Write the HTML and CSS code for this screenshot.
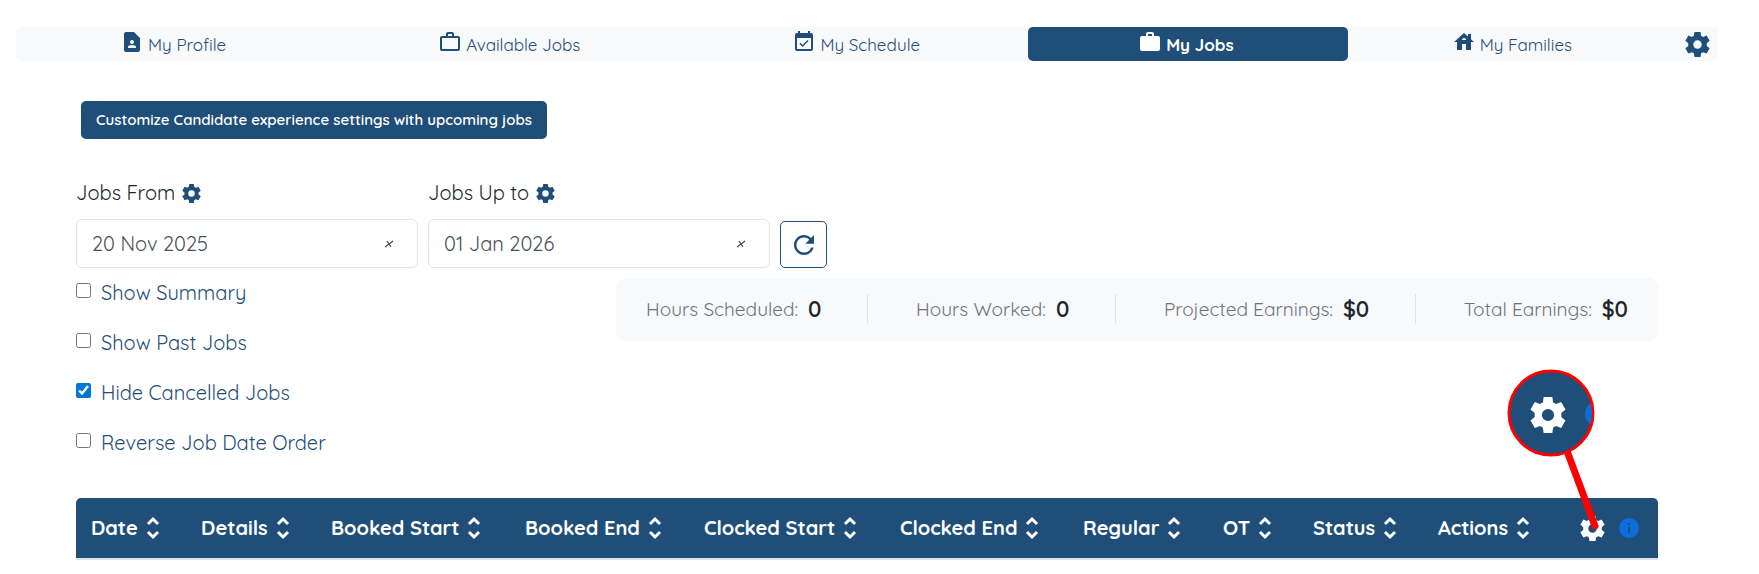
FILE: index.html
```
<!DOCTYPE html>
<html lang="en">
<head>
    <meta charset="UTF-8">
    <meta name="viewport" content="width=device-width, initial-scale=1.0">
    <title>My Jobs</title>
    <link rel="stylesheet" href="styles.css">
</head>
<body>

<!-- shared icons -->
<svg class="sprite" aria-hidden="true">
    <symbol id="gear" viewBox="2 2 20 20">
        <path fill-rule="evenodd" d="M9.6 2h4.8l.5 3 1.6.9 2.8-1.1 2.4 4.2-2.3 1.9v2.2l2.3 1.9-2.4 4.2-2.8-1.1-1.6.9-.5 3H9.6l-.5-3-1.6-.9-2.8 1.1L2.3 15l2.3-1.9v-2.2L2.3 9l2.4-4.2 2.8 1.1 1.6-.9zM12 8.6a3.4 3.4 0 1 0 0 6.8 3.4 3.4 0 0 0 0-6.8z"/>
    </symbol>
    <symbol id="sort" viewBox="0 0 14 24">
        <path d="M2 8l5-5 5 5M2 16l5 5 5-5" fill="none" stroke="currentColor" stroke-width="3"/>
    </symbol>
</svg>

<nav class="tabs">
    <a class="tab" href="#profile">
        <svg class="tab-icon" viewBox="0 0 24 24"><path d="M14 2H6c-1.1 0-1.99.9-1.99 2L4 20c0 1.1.89 2 1.99 2H18c1.1 0 2-.9 2-2V8l-6-6zm-2 8c1.1 0 2 .9 2 2s-.9 2-2 2-2-.9-2-2 .9-2 2-2zm4 8H8v-.57c0-.81.48-1.53 1.22-1.85.85-.37 1.79-.58 2.78-.58.99 0 1.93.21 2.78.58.74.32 1.22 1.04 1.22 1.85V18z"/></svg>
        <span>My Profile</span>
    </a>
    <a class="tab" href="#available">
        <svg class="tab-icon" viewBox="0 0 24 24"><path d="M14 6V4h-4v2h4zM4 8v11h16V8H4zm16-2c1.11 0 2 .89 2 2v11c0 1.11-.89 2-2 2H4c-1.11 0-2-.89-2-2l.01-11c0-1.11.88-2 1.99-2h4V4c0-1.11.89-2 2-2h4c1.11 0 2 .89 2 2v2h4z"/></svg>
        <span>Available Jobs</span>
    </a>
    <a class="tab" href="#schedule">
        <svg class="tab-icon" viewBox="0 0 24 24"><path d="M16.53 11.06L15.47 10l-4.88 4.88-2.12-2.12-1.06 1.06L10.59 17l5.94-5.94zM19 3h-1V1h-2v2H8V1H6v2H5c-1.11 0-1.99.9-1.99 2L3 19c0 1.1.89 2 2 2h14c1.1 0 2-.9 2-2V5c0-1.1-.9-2-2-2zm0 16H5V8h14v11z"/></svg>
        <span>My Schedule</span>
    </a>
    <a class="tab active" href="#jobs">
        <svg class="tab-icon" viewBox="0 0 24 24"><path d="M20 6h-4V4c0-1.11-.89-2-2-2h-4c-1.11 0-2 .89-2 2v2H4c-1.11 0-1.99.89-1.99 2L2 19c0 1.11.89 2 2 2h16c1.11 0 2-.89 2-2V8c0-1.11-.89-2-2-2zm-6 0h-4V4h4v2z"/></svg>
        <span>My Jobs</span>
    </a>
    <a class="tab" href="#families">
        <svg class="tab-icon" viewBox="0 0 24 24"><path d="M19 9.3V4h-3v2.6L12 3 2 12h3v8h5v-6h4v6h5v-8h3l-3-2.7zM10 10c0-1.1.9-2 2-2s2 .9 2 2h-4z"/></svg>
        <span>My Families</span>
    </a>
    <button class="icon-button tab-settings" type="button" aria-label="Tab settings"><svg class="gear-large"><use href="#gear"/></svg></button>
</nav>

<main>
    <button class="customize" type="button">Customize Candidate experience settings with upcoming jobs</button>

    <form class="filters">
        <div class="field">
            <div class="field-title">
                <label for="from">Jobs From</label>
                <button class="icon-button" type="button" aria-label="Jobs From settings"><svg class="gear-small"><use href="#gear"/></svg></button>
            </div>
            <div class="date-box">
                <input id="from" type="text" value="20 Nov 2025">
                <button class="clear" type="button" aria-label="Clear date"><svg viewBox="0 0 10 8"><path d="M1 7l8-6M3 1l4 6"/></svg></button>
            </div>
        </div>
        <div class="field">
            <div class="field-title">
                <label for="to">Jobs Up to</label>
                <button class="icon-button" type="button" aria-label="Jobs Up to settings"><svg class="gear-small"><use href="#gear"/></svg></button>
            </div>
            <div class="date-box">
                <input id="to" type="text" value="01 Jan 2026">
                <button class="clear" type="button" aria-label="Clear date"><svg viewBox="0 0 10 8"><path d="M1 7l8-6M3 1l4 6"/></svg></button>
            </div>
        </div>
        <button class="refresh" type="button" aria-label="Refresh">
            <svg viewBox="0 0 24 24"><path d="M17.65 6.35A7.958 7.958 0 0 0 12 4c-4.42 0-7.99 3.58-7.99 8s3.57 8 7.99 8c3.73 0 6.84-2.55 7.73-6h-2.08A5.99 5.99 0 0 1 12 18c-3.31 0-6-2.69-6-6s2.69-6 6-6c1.66 0 3.14.69 4.22 1.78L13 11h7V4l-2.35 2.35z"/></svg>
        </button>
    </form>

    <div class="overview">
        <div class="options">
            <label><input type="checkbox"><span>Show Summary</span></label>
            <label><input type="checkbox"><span>Show Past Jobs</span></label>
            <label><input type="checkbox" checked><span>Hide Cancelled Jobs</span></label>
            <label><input type="checkbox"><span>Reverse Job Date Order</span></label>
        </div>
        <div class="summary">
            <div class="stat">Hours Scheduled: <strong>0</strong></div>
            <div class="stat">Hours Worked: <strong>0</strong></div>
            <div class="stat">Projected Earnings: <strong>$0</strong></div>
            <div class="stat">Total Earnings: <strong>$0</strong></div>
        </div>
    </div>

    <div class="jobs">
        <table>
            <colgroup>
                <col class="c-date"><col class="c-details"><col class="c-bstart"><col class="c-bend"><col class="c-cstart"><col class="c-cend"><col class="c-regular"><col class="c-ot"><col class="c-status"><col class="c-actions"><col class="c-tools">
            </colgroup>
            <thead>
                <tr>
                    <th>Date<svg class="sort"><use href="#sort"/></svg></th>
                    <th>Details<svg class="sort"><use href="#sort"/></svg></th>
                    <th>Booked Start<svg class="sort"><use href="#sort"/></svg></th>
                    <th>Booked End<svg class="sort"><use href="#sort"/></svg></th>
                    <th>Clocked Start<svg class="sort"><use href="#sort"/></svg></th>
                    <th>Clocked End<svg class="sort"><use href="#sort"/></svg></th>
                    <th>Regular<svg class="sort"><use href="#sort"/></svg></th>
                    <th>OT<svg class="sort"><use href="#sort"/></svg></th>
                    <th>Status<svg class="sort"><use href="#sort"/></svg></th>
                    <th>Actions<svg class="sort"><use href="#sort"/></svg></th>
                    <th>
                        <div class="tools">
                            <button class="icon-button light" type="button" aria-label="Column settings"><svg class="gear-large"><use href="#gear"/></svg></button>
                            <button class="icon-button info" type="button" aria-label="Info"><svg viewBox="0 0 20 20"><circle cx="10" cy="10" r="10"/><path d="M9 9h2v6H9zM9 5h2v2H9z"/></svg></button>
                        </div>
                    </th>
                </tr>
            </thead>
        </table>

        <!-- magnified callout over the column settings gear -->
        <svg class="callout" viewBox="0 0 100 170" aria-hidden="true">
            <clipPath id="lens"><circle cx="45" cy="45" r="41"/></clipPath>
            <path class="pointer" d="M61 83l28 75"/>
            <circle class="lens" cx="45" cy="45" r="42"/>
            <circle class="lens-info" cx="91" cy="46" r="12" clip-path="url(#lens)"/>
            <use class="lens-gear" href="#gear" x="24" y="29" width="36" height="36"/>
        </svg>
    </div>
</main>

</body>
</html>
```
FILE: styles.css
```
* {
    box-sizing: border-box;
}
body {
    margin: 0;
    padding: 27px 41px 14px 16px;
    font-family: Quicksand, Lato, sans-serif;
    font-size: 20px;
    font-weight: 400;
    line-height: 24px;
    color: #212529;
    background: #fff;
}
button, input {
    font: inherit;
}
button {
    cursor: pointer;
}
.sprite {
    position: absolute;
    width: 0;
    height: 0;
}
svg {
    display: block;
    fill: currentColor;
}

/* tabs */
.tabs {
    display: flex;
    height: 34px;
    border-radius: 5px;
    background: #f8f9fb;
}
.tab {
    display: flex;
    flex: 1 1 auto;
    justify-content: center;
    gap: 4px;
    padding: 3px 18px 3px 14px;
    border-radius: 5px;
    font-size: 17px;
    color: #1f4e79;
    text-decoration: none;
}
.tab span {
    padding-top: 3px;
}
.tab-icon {
    width: 24px;
    height: 24px;
}
.tab.active {
    padding: 3px 24px 3px 20px;
    background: #1f4e79;
    color: #fff;
    font-weight: 700;
}
.icon-button {
    padding: 0;
    border: 0;
    background: none;
    color: #1f4e79;
}
.tab-settings {
    padding: 0 8px 0 5px;
}
.gear-large {
    width: 25px;
    height: 25px;
}
.gear-small {
    width: 19px;
    height: 19px;
}

main {
    padding: 40px 60px 0;
}
.customize {
    display: block;
    height: 38px;
    margin-left: 5px;
    padding: 0 15px;
    border: 0;
    border-radius: 5px;
    background: #1f4e79;
    color: #fff;
    font-size: 15px;
    font-weight: 600;
}

/* date filters */
.filters {
    display: flex;
    align-items: flex-end;
    gap: 10px;
    margin-top: 42px;
}
.field {
    width: 342px;
}
.field-title {
    display: flex;
    align-items: center;
    gap: 7px;
    height: 24px;
    margin-bottom: 14px;
}
.date-box {
    display: flex;
    align-items: center;
    height: 49px;
    padding: 0 23px 0 15px;
    border: 1px solid #e4e5e7;
    border-radius: 6px;
}
.date-box input {
    flex: 1;
    min-width: 0;
    padding: 0;
    border: 0;
    outline: 0;
    background: none;
    color: #495057;
}
.clear {
    padding: 0;
    border: 0;
    background: none;
}
.clear svg {
    width: 10px;
    height: 8px;
    fill: none;
    stroke: #495057;
    stroke-width: 1.3;
}
.refresh {
    display: flex;
    align-items: center;
    justify-content: center;
    width: 47px;
    height: 47px;
    padding: 0;
    border: 1px solid #1f4e79;
    border-radius: 5px;
    background: #fff;
    color: #1f4e79;
}
.refresh svg {
    width: 30px;
    height: 30px;
}

/* options and totals */
.overview {
    display: flex;
    align-items: flex-start;
    justify-content: space-between;
    margin-top: 10px;
}
.options {
    display: flex;
    flex-direction: column;
    gap: 26px;
    padding-top: 3px;
}
.options label {
    display: flex;
    gap: 10px;
    height: 24px;
    color: #1f4e79;
}
.options input {
    width: 15px;
    height: 15px;
    margin: 2px 0 0;
    accent-color: #0078d7;
}
.summary {
    display: flex;
    width: 1042px;
    padding: 16px 30px 17px;
    justify-content: space-between;
    border-radius: 10px;
    background: #f8f9fb;
}
.stat {
    display: flex;
    align-items: center;
    gap: 10px;
    height: 30px;
    font-size: 19px;
    color: #6c757d;
}
.stat + .stat {
    padding-left: 48px;
    border-left: 1px solid #dee2e6;
}
.stat strong {
    font-size: 22px;
    font-weight: 600;
    color: #212529;
}

/* jobs table */
.jobs {
    position: relative;
    margin-top: 43px;
}
table {
    width: 100%;
    table-layout: fixed;
    border-spacing: 0;
    border-bottom: 2px solid #dee2e6;
}
th {
    height: 60px;
    padding: 2px 0 0 15px;
    background: #1f4e79;
    color: #fff;
    font-weight: 700;
    text-align: left;
    white-space: nowrap;
}
th:first-child {
    border-top-left-radius: 5px;
}
th:last-child {
    padding: 0 0 0 16px;
    border-top-right-radius: 5px;
}
.sort {
    display: inline-block;
    width: 14px;
    height: 24px;
    margin: 0 0 2px 8px;
    vertical-align: middle;
}
.c-date { width: 110px; }
.c-details { width: 130px; }
.c-bstart { width: 194px; }
.c-bend { width: 179px; }
.c-cstart { width: 196px; }
.c-cend { width: 183px; }
.c-regular { width: 140px; }
.c-ot { width: 90px; }
.c-status { width: 125px; }
.c-actions { width: 141px; }
.c-tools { width: 94px; }
.tools {
    display: flex;
    align-items: center;
    gap: 14px;
}
.light {
    color: #fff;
}
.info svg {
    width: 20px;
    height: 20px;
}
.info circle {
    fill: #0d6edb;
}

/* callout lies over the table header */
.callout {
    position: absolute;
    top: -130px;
    right: 52px;
    width: 100px;
    height: 170px;
    pointer-events: none;
}
.lens {
    fill: #1f4e79;
    stroke: #f00;
    stroke-width: 3px;
}
.lens-info {
    fill: #0d6edb;
}
.lens-gear {
    fill: #fff;
}
.pointer {
    stroke: #f00;
    stroke-width: 7px;
    stroke-linecap: round;
}
```
